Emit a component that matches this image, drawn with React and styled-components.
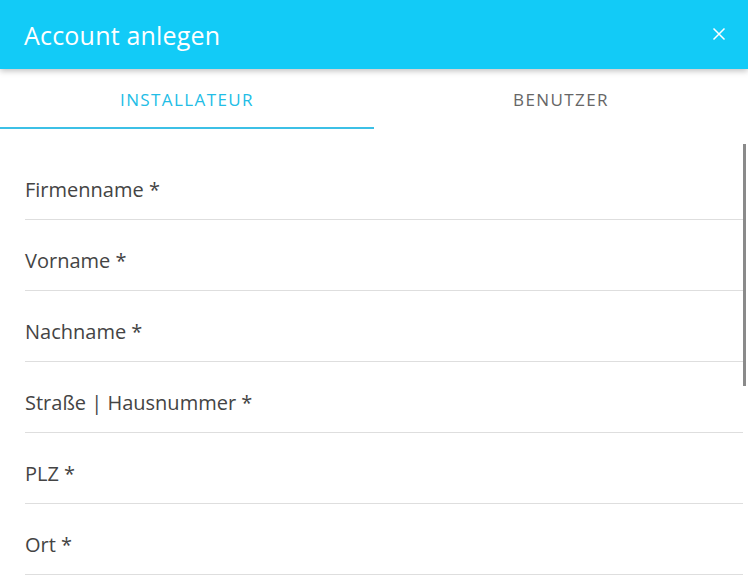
import styled, { createGlobalStyle } from "styled-components";

const GlobalStyle = createGlobalStyle`
  html, body {
    margin: 0;
    padding: 0;
    height: 100%;
    background: #fff;
    font-family: "Open Sans", "Noto Sans", sans-serif;
  }
  #root {
    height: 100%;
  }
`;

const Dialog = styled.div`
  height: 100vh;
  display: flex;
  flex-direction: column;
  background: #fff;
  overflow: hidden;
`;

const Header = styled.header`
  position: relative;
  z-index: 2;
  height: 69px;
  flex: none;
  background: #12cbf7;
  box-shadow: 0 2px 6px rgba(0, 0, 0, 0.25);
  display: flex;
  align-items: center;
  justify-content: space-between;
  padding: 0 18px 0 24px;
`;

const Title = styled.h1`
  margin: 0;
  font-size: 25px;
  font-weight: 400;
  color: #fff;
  letter-spacing: 0.2px;
`;

const CloseButton = styled.button`
  border: none;
  background: transparent;
  padding: 4px;
  margin-bottom: 1px;
  display: flex;
  cursor: pointer;
`;

const Tabs = styled.nav`
  flex: none;
  height: 60px;
  display: grid;
  grid-template-columns: 1fr 1fr;
`;

const Tab = styled.div`
  display: flex;
  align-items: center;
  justify-content: center;
  font-size: 17px;
  letter-spacing: 1.4px;
  text-transform: uppercase;
  color: ${(p) => (p.$active ? "#22bde6" : "#666")};
  border-bottom: 2px solid ${(p) => (p.$active ? "#3cc0e6" : "transparent")};
  padding-top: 3px;
  box-sizing: border-box;
`;

const BodyWrap = styled.div`
  position: relative;
  flex: 1;
  min-height: 0;
`;

const Body = styled.div`
  height: 100%;
  overflow: hidden;
  padding: 20px 5px 0 25px;
  box-sizing: border-box;
`;

const ScrollThumb = styled.div`
  position: absolute;
  top: 15px;
  right: 2px;
  width: 3px;
  height: 242px;
  background: #8a8a8a;
`;

const Field = styled.label`
  display: flex;
  align-items: center;
  height: 71px;
  padding-top: 10px;
  box-sizing: border-box;
  border-bottom: 1px solid #dedede;
  font-size: 20px;
  color: #444;
`;

const fields = [
  "Firmenname *",
  "Vorname *",
  "Nachname *",
  "Straße | Hausnummer *",
  "PLZ *",
  "Ort *",
];

export default function App() {
  return (
    <>
      <GlobalStyle />
      <Dialog>
        <Header>
          <Title>Account anlegen</Title>
          <CloseButton aria-label="Schließen">
            <svg width="14" height="14" viewBox="0 0 14 14">
              <path
                d="M1.5 1.5 L12.5 12.5 M12.5 1.5 L1.5 12.5"
                stroke="#fff"
                strokeWidth="1.5"
                fill="none"
              />
            </svg>
          </CloseButton>
        </Header>
        <Tabs>
          <Tab $active>Installateur</Tab>
          <Tab>Benutzer</Tab>
        </Tabs>
        <BodyWrap>
          <Body>
            {fields.map((f) => (
              <Field key={f}>{f}</Field>
            ))}
          </Body>
          <ScrollThumb />
        </BodyWrap>
      </Dialog>
    </>
  );
}
